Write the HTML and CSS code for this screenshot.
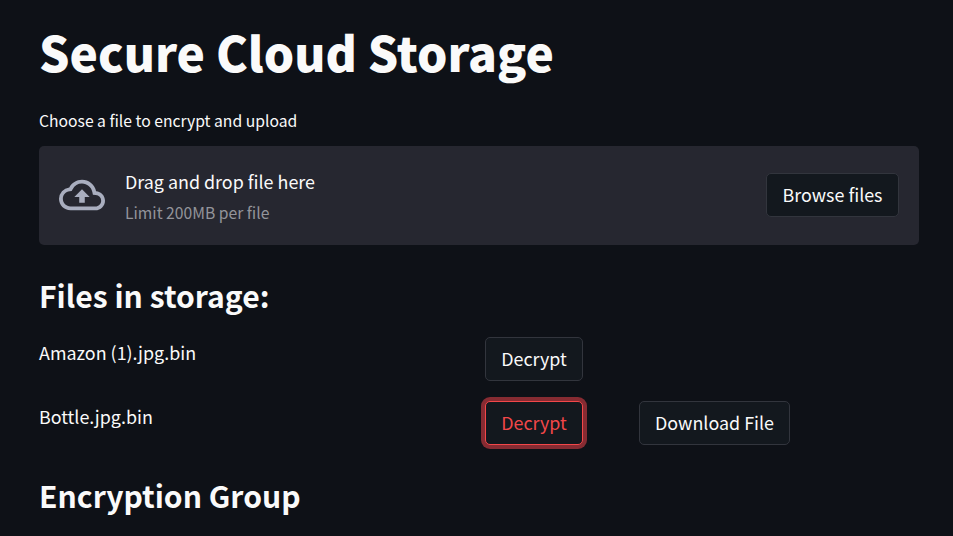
FILE: index.html
```html
<!DOCTYPE html>
<html lang="en">
<head>
<meta charset="utf-8">
<title>Secure Cloud Storage</title>
<link rel="stylesheet" href="styles.css">
</head>
<body>
<main class="page">
  <h1 class="title">Secure Cloud Storage</h1>
  <p class="label">Choose a file to encrypt and upload</p>
  <section class="dropzone">
    <svg class="cloud" viewBox="0 0 24 24" aria-hidden="true"><path d="M19.35 10.04A7.49 7.49 0 0012 4C9.11 4 6.6 5.64 5.35 8.04A5.994 5.994 0 000 14c0 3.31 2.69 6 6 6h13c2.76 0 5-2.24 5-5 0-2.64-2.05-4.78-4.65-4.96zM19 18H6c-2.21 0-4-1.79-4-4 0-2.05 1.53-3.76 3.56-3.97l1.07-.11.5-.95A5.469 5.469 0 0112 6c2.62 0 4.88 1.86 5.39 4.43l.3 1.5 1.53.11A2.98 2.98 0 0122 15c0 1.65-1.35 3-3 3zM8 13h2.55v3h2.9v-3H16l-4-4z"/></svg>
    <div class="hint">
      <span class="hint-main">Drag and drop file here</span>
      <span class="hint-limit">Limit 200MB per file</span>
    </div>
    <button class="button browse">Browse files</button>
  </section>
  <h2 class="heading">Files in storage:</h2>
  <div class="row">
    <span class="file">Amazon (1).jpg.bin</span>
    <button class="button decrypt">Decrypt</button>
  </div>
  <div class="row">
    <span class="file">Bottle.jpg.bin</span>
    <button class="button decrypt focused">Decrypt</button>
    <button class="button download">Download File</button>
  </div>
  <h2 class="heading group">Encryption Group</h2>
</main>
</body>
</html>
```
FILE: styles.css
```css
* { box-sizing: border-box; }
body {
  margin: 0;
  height: 536px;
  overflow: hidden;
  background: #0e1117;
  color: #fafafa;
  font-family: "Noto Sans CJK SC", "Noto Sans", sans-serif;
  font-size: 17.9px;
}
.page { padding: 20px 34px 0 39px; }
.title {
  margin: 0;
  font-size: 47.8px;
  font-weight: 900;
  line-height: 64px;
  white-space: nowrap;
}
.label {
  margin: 25px 0 13px;
  font-size: 15.7px;
  line-height: 24px;
}
.dropzone {
  display: flex;
  align-items: center;
  height: 99px;
  padding: 0 20px 2px;
  border-radius: 5px;
  background: #262730;
}
.cloud {
  width: 46px;
  height: 46px;
  margin-right: 20px;
  fill: #a9aebf;
}
.hint { display: flex; flex-direction: column; padding-top: 2px; }
.hint-main { line-height: 32px; }
.hint-limit {
  padding-top: 1px;
  margin-bottom: -1px;
  font-size: 15.7px;
  line-height: 30px;
  color: #93949a;
}
.button {
  flex: none;
  height: 44px;
  padding: 0 0 2px;
  border: 1px solid #32353d;
  border-radius: 5px;
  background: #13181e;
  color: inherit;
  font: inherit;
  line-height: 40px;
  white-space: nowrap;
}
.browse { width: 133px; margin-left: auto; }
.heading {
  margin: 26px 0 17px;
  font-size: 30.1px;
  font-weight: 600;
  line-height: 49px;
}
.row {
  display: grid;
  grid-template-columns: 446px 154px 1fr;
  height: 44px;
  margin-bottom: 20px;
}
.file { line-height: 30px; }
.decrypt { width: 98px; }
.download { width: 151px; }
.focused {
  border-color: #f24749;
  color: #f24749;
  box-shadow: 0 0 0 4px #862b32;
}
.group { margin-top: 26px; }
```
